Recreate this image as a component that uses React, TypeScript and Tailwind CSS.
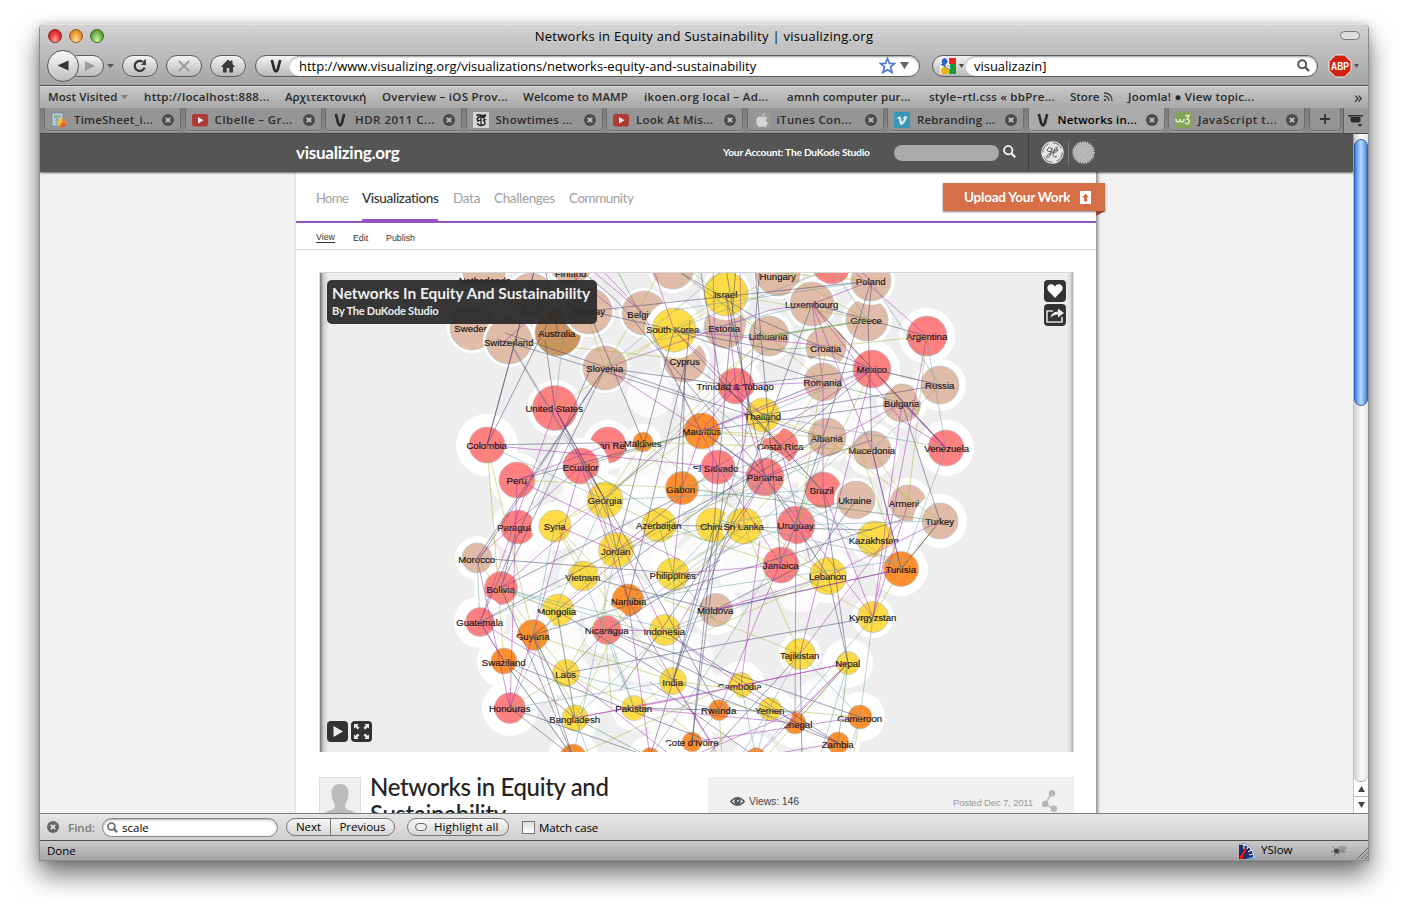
import React from "react";

const LUCIDA = "font-['Open_Sans','Noto_Sans',sans-serif]";
const INSPIRA = "font-['Lato','Open_Sans',sans-serif]";

const T = "#e0bba7";
const Y = "#ffdc46";
const P = "#ff8080";
const O = "#ff8f2e";
const B = "#cd935f";

type Node = [label: string, x: number, y: number, r: number, halo: number, fill: string, lx?: number, ly?: number];

const NODES: Node[] = [
  ["Netherlands", 484, 268, 22, 25, T, 485, 280],
  ["", 531, 295, 22, 25, T],
  ["Finland", 571, 262, 22, 25, T, 571, 273],
  ["", 673, 268, 21, 25, T],
  ["Sweden", 472, 328, 22, 25, T, 472, 328.5],
  ["Australia", 558, 333, 23, 26, B, 557, 333],
  ["Norway", 589, 311, 23, 26, T],
  ["Switzerland", 509, 341, 23, 26, T, 509, 342],
  ["Belgium", 644, 313, 22, 25, T, 645, 314],
  ["Cyprus", 685, 361, 21, 25, T, 685, 361],
  ["Estonia", 725, 327, 21, 25, T, 724.5, 328.5],
  ["Lithuania", 769, 336, 20, 25, T, 768.5, 336.5],
  ["South Korea", 674, 330, 22, 29, Y, 673, 329.5],
  ["Hungary", 778, 274, 22, 25, T, 778, 276],
  ["Croatia", 826, 347, 20, 25, T, 826, 348],
  ["", 832, 264, 20, 26, P],
  ["Greece", 867, 320, 21, 25, T, 866.5, 320],
  ["Luxembourg", 812, 304, 22, 25, T],
  ["Poland", 871, 281, 20, 24, T],
  ["Israel", 726, 294, 22, 26, Y],
  ["Slovenia", 605, 368, 22, 25, T],
  ["Argentina", 927, 336, 20, 28, P],
  ["Romania", 823, 382, 19, 26, T],
  ["Bulgaria", 902, 403, 19, 25, T],
  ["Russia", 940, 385, 19, 26, T],
  ["Mexico", 872, 369, 19, 28, P],
  ["Trinidad & Tobago", 736, 386, 18, 27, P, 735.5, 386.5],
  ["Costa Rica", 780, 446, 18, 28, P, 780.5, 446],
  ["Thailand", 763, 415, 17, 24, Y, 763, 416],
  ["United States", 555, 408, 22.5, 28, P, 554.5, 408.5],
  ["Colombia", 487, 445, 18, 31, P],
  ["Iran Rep", 608, 445, 18, 25, P, 612, 445],
  ["Maldives", 643, 442, 10, 18, O, 643, 443],
  ["Peru", 517, 480, 18, 27, P],
  ["Ecuador", 581, 466, 18, 28, P, 581, 467],
  ["El Salvador", 718, 467, 17, 25, P, 717.5, 468],
  ["Mauritius", 702, 431, 18, 22, O],
  ["Gabon", 682, 488, 16.5, 23, O, 681, 489],
  ["Panama", 765, 477, 19, 28, P],
  ["Albania", 827, 437, 19, 26, T, 827, 438],
  ["Macedonia", 872, 450, 19, 27, T],
  ["Venezuela", 946, 448, 18, 28, P, 947, 448],
  ["Brazil", 823, 490, 18, 25, P, 822, 490],
  ["Armenia", 908, 503, 18, 25, T, 907, 503],
  ["Ukraine", 856, 500, 19, 22, T, 855, 500],
  ["Georgia", 605, 500, 18, 26, Y],
  ["Paraguay", 518, 527, 17, 26, P, 518, 527],
  ["Syria", 555, 526, 16, 24, Y],
  ["Azerbaijan", 659, 525, 17, 26, Y],
  ["China", 713, 525, 17, 24, Y, 713, 526],
  ["Sri Lanka", 744, 526, 18, 22, Y],
  ["Uruguay", 796, 525, 19, 27, P, 796, 525],
  ["Turkey", 940, 521, 18, 27, T],
  ["Kazakhstan", 875, 539, 18, 25, Y, 874, 540],
  ["Jordan", 616, 550, 17.5, 26, Y, 616, 551],
  ["Jamaica", 781, 565, 18, 25, P],
  ["Lebanon", 828, 576, 18.5, 27, Y],
  ["Tunisia", 901, 569, 17.5, 27, O],
  ["Bolivia", 501, 588, 16.5, 27, P, 501, 589],
  ["Morocco", 477, 558, 15, 22, T, 477, 559],
  ["Vietnam", 583, 576, 15, 24, Y, 583, 577],
  ["Philippines", 673, 574, 16, 26, Y, 673, 575],
  ["Namibia", 628, 600, 16, 24, O, 629, 601],
  ["Mongolia", 558, 610, 16, 23, Y, 557, 611],
  ["Guyana", 533, 635, 15.5, 23, O, 533, 636],
  ["Guatemala", 480, 622, 14.5, 26, P],
  ["Nicaragua", 607, 630, 14.5, 24, P],
  ["Indonesia", 665, 630, 15.5, 24, Y, 664.5, 631],
  ["Moldova", 716, 610, 16.5, 25, T, 715.5, 610.5],
  ["Kyrgyzstan", 873, 617, 15.5, 21, Y],
  ["Swaziland", 504, 661, 13, 27, O, 504, 662],
  ["Laos", 566, 673, 13.5, 23, Y, 566, 674],
  ["Tajikistan", 800, 654, 15.5, 21, Y, 800, 655],
  ["Nepal", 848, 663, 11.5, 25, Y],
  ["India", 673, 681, 13.5, 23, Y, 673, 682],
  ["Cambodia", 741, 685, 12.5, 24, Y, 740, 686],
  ["Honduras", 510, 708, 15.5, 28, P],
  ["Bangladesh", 575, 718, 13, 24, Y, 575, 719],
  ["Pakistan", 634, 708, 12.5, 23, Y],
  ["Rwanda", 719, 710, 10.5, 23, O],
  ["Senegal", 795, 723, 11, 25, O, 795, 724],
  ["Yemen", 770, 709, 11.5, 23, Y, 770, 710],
  ["Cameroon", 860, 717, 12, 25, O, 860, 718],
  ["Zambia", 838, 743, 11, 22, O, 838, 744],
  ["Cote d'Ivoire", 692, 742, 10, 22, O, 692, 742],
  ["", 573, 757, 13, 25, O],
  ["", 650, 757, 9.5, 22, O],
  ["", 756, 757, 9.5, 22, O],
];

const BLANK_HALOS = [
  [640, 480], [650, 395], [740, 350], [790, 400], [700, 400], [745, 440], [850, 410], [800, 460], [850, 350],
  [640, 500], [680, 455], [760, 500], [770, 550], [700, 560], [740, 570], [640, 550], [585, 530], [580, 505],
  [840, 530], [900, 530], [600, 600], [650, 610], [690, 600], [800, 590], [530, 560], [530, 600], [560, 640],
  [690, 655], [640, 660], [700, 690], [600, 690], [740, 720], [820, 700], [820, 730], [540, 680], [670, 720],
];

const LINKS: { color: string; d: string }[] = [
  {
    color: "#3c3f6b",
    d: "M487 445L535 268M487 445L643 442M535 268L487 445L559 300M505 333L702 400L830 440M505 341L702 402M558 333L545 268M605 368L480 558M605 368L500 588M589 311L643 442M578 268L616 300L770 480M726 268L750 415L780 446M674 330L822 490M686 361L763 415M726 294L765 477M674 330L616 551M702 431L902 403M589 311L871 281M690 320L675 488M685 361L682 488M872 281L868 320L872 450L901 569M871 281L823 437L795 525M940 385L763 415M946 448L812 304M946 448L872 369M927 336L812 304M872 369L760 320L673 268M902 403L940 521L901 569M765 477L872 440M517 480L702 431M480 622L616 551L823 437M477 558L700 575M477 558L605 368M533 635L740 480L872 369M583 576L715 610L901 569M501 588L673 500M566 673L873 617M480 622L504 661L573 757M510 708L650 757M510 708L573 757M504 661L719 745M501 588L573 757M557 611L673 680L838 743M607 630L860 717M566 673L607 630L720 560M634 708L795 712M664 631L838 743M575 718L533 635M800 654L802 757M800 654L706 757M673 681L714 525L736 268M673 681L745 440L760 268M650 757L673 681L812 304M719 710L605 500L555 408M692 742L725 480M828 576L848 663M823 490L848 663M715 610L812 560L856 500M756 757L650 682M822 490L720 380L700 268M533 635L901 520M480 622L590 370M901 569L940 521M555 408L605 500M555 408L545 340M674 330L872 369M605 368L736 386L872 369M509 341L605 500L628 600M755 268L781 565M686 361L628 600M702 431L765 477L828 576M765 477L620 690M659 525L872 530M714 525L692 742M823 382L674 330L589 311M607 630L770 709L838 743M557 611L575 718M533 635L573 757",
  },
  {
    color: "#a22bb0",
    d: "M589 268L500 345M589 268L643 313L718 467M562 268L616 310M600 268L643 313M740 268L744 526M713 268L715 350L712 500M927 336L850 268M946 448L812 304M812 304L872 450L901 569M812 304L770 310L605 368M871 281L812 304M674 330L836 347M736 386L823 382M736 386L625 480L501 588M605 368L702 431L823 382M517 480L600 520L680 560M487 445L718 467L765 477M555 408L664 631M607 445L517 480M555 408L480 622M581 466L477 558M517 480L510 708M581 466L628 600M517 527L501 588M702 431L872 369L940 385M763 415L674 330M765 477L676 630M902 403L765 477M902 403L873 617M902 403L946 448M823 490L823 382L812 304M796 525L795 723M796 525L719 710M781 565L673 574M872 369L800 654M927 336L873 617M940 521L828 576L715 610M901 569L715 610M908 503L873 617M823 490L873 617M616 551L555 525M659 525L557 611M628 600L673 681L710 740M607 630L664 631L795 723M480 622L566 673L673 757M504 661L480 622M510 708L533 635L581 466M504 661L575 718L673 700L848 663M634 708L795 723M848 663L800 710L690 757M848 663L756 757M860 717L692 742M838 743L756 757M575 718L719 690L848 663M628 600L650 757M673 681L719 757M780 446L810 560L828 576M477 558L510 708M718 467L781 565M653 268L674 330M736 386L702 431L682 488L673 574M765 477L736 386L726 294M812 304L901 420L946 448M702 431L765 477L873 617M616 551L717 467L872 369M857 268L871 281M800 654L901 520M760 540L741 685",
  },
  {
    color: "#6f9fa8",
    d: "M571 268L555 408M509 341L581 466L616 551M726 268L605 368M674 330L832 268M871 281L674 310M871 281L940 385M812 304L660 340M867 320L768 337L674 330M926 336L946 448L901 569M872 369L763 415M823 382L702 431M763 415L946 448M487 445L605 500M555 525L533 635M517 527L501 588M605 500L510 708M616 551L573 757M477 558L480 622M501 588L673 630L828 576M583 576L634 708M674 574L673 681M628 600L901 560M901 560L718 520M940 521L796 525M856 500L702 560L607 630M765 477L828 576M765 477L673 574M828 437L781 565M902 403L715 560M796 525L728 640L650 757M873 617L860 717L848 757M873 617L756 757M800 654L860 717M848 663L820 757M741 685L692 742M741 685L756 757M566 673L719 710M510 708L673 681M575 718L664 631M770 709L756 757M715 610L664 631M504 661L573 757M533 635L575 718L590 757M659 525L823 460M718 467L901 569M705 400L823 490M940 385L872 450M832 268L867 320M718 467L872 539M682 488L828 437M605 500L823 490M702 431L901 569M744 526L628 600M501 588L673 640M616 551L715 525L856 500M607 630L634 708M583 576L480 622M800 654L741 757",
  },
  {
    color: "#abb23a",
    d: "M487 445L504 661M487 445L533 635M509 341L702 361M605 368L674 330L776 276M555 408L726 294M571 268L605 368M605 500L781 320M726 294L871 320M726 268L871 281M776 268L867 320M927 336L826 347M927 336L908 503M822 382L765 477M872 369L796 525M826 347L800 520M702 431L827 437M702 431L555 525M763 415L860 450L901 569M517 480L682 488M823 437L940 521M605 500L555 525L583 576M605 500L659 525M477 558L583 718M501 588L566 673L634 708M555 525L607 600L673 681M555 525L628 600M659 525L781 565L873 617M744 526L664 600M744 526L800 654M714 525L828 576M616 551L557 611M605 500L605 630L612 708M828 576L708 630M873 617L901 569L940 521M800 654L665 600M533 635L673 681L741 690M504 661L575 718M510 708L566 673L607 600M575 718L628 600M634 708L673 681M719 710L722 757M770 709L860 717M848 663L770 752M673 718L720 757M860 717L853 757M573 757L719 690M795 723L719 700M662 268L605 368M871 320L768 337L690 400M902 403L812 304M908 503L872 450M690 270L823 382M643 442L828 576M643 442L872 450M702 431L780 440M765 477L605 560M616 551L718 467L763 415M643 442L605 500M673 574L744 526L823 437",
  },
  {
    color: "#4d8a4d",
    d: "M581 466L702 431M605 500L765 350L826 347M872 369L940 385M823 382L902 403M616 268L702 431M682 488L940 521M575 718L650 757M795 723L848 663M659 525L673 574L715 620M848 663L838 743M768 336L867 320M501 588L557 611M581 466L702 540M674 268L768 337",
  },
];

function Graph() {
  return (
    <svg className="block h-[479px] w-[755px]" viewBox="319 273 755 479">
      {BLANK_HALOS.map(([x, y]) => (
        <circle key={`${x}-${y}`} cx={x} cy={y} r={23} fill="#fff" opacity="0.75" />
      ))}
      {NODES.map(([label, x, y, r, halo, fill, lx, ly], i) => (
        <g key={i}>
          <circle cx={x} cy={y} r={halo} fill="#fff" />
          <circle cx={x} cy={y} r={r} fill={fill} stroke="#b9c2c6" strokeWidth="0.7" />
          <text
            x={(lx ?? x) - 0.3}
            y={(ly ?? y) + 3.5}
            textAnchor="middle"
            fontSize="9.6"
            className="font-['Liberation_Sans',Arial,sans-serif]"
            fill="#111"
            stroke="#111"
            strokeWidth="0.15"
          >
            {label}
          </text>
        </g>
      ))}
      {LINKS.map((l) => (
        <path key={l.color} d={l.d} fill="none" stroke={l.color} strokeWidth="0.9" opacity="0.55" />
      ))}
    </svg>
  );
}

function CloseDot() {
  return (
    <svg className="size-3 shrink-0" viewBox="0 0 12 12">
      <circle cx="6" cy="6" r="6" fill="#4b4b4b" />
      <path d="M3.8 3.8l4.4 4.4M8.2 3.8l-4.4 4.4" stroke="#c4c4c4" strokeWidth="1.8" />
    </svg>
  );
}

function VLogo({ className }: { className: string }) {
  return (
    <svg className={className} viewBox="0 0 16 16">
      <path d="M3.8 2L6.3 11.5Q8 15.5 9.7 11.5L12.2 2" fill="none" stroke="#2b2b2b" strokeWidth="2.7" />
    </svg>
  );
}

function TabIcon({ kind }: { kind: string }) {
  const c = "size-4 shrink-0";
  if (kind === "v") return <VLogo className={c} />;
  if (kind === "youtube")
    return (
      <svg className={c} viewBox="0 0 16 16">
        <rect y="2" width="16" height="12.5" rx="2.5" fill="#b03a38" />
        <path d="M6 5l5.5 3.2L6 11.5z" fill="#eee" />
      </svg>
    );
  if (kind === "sheet")
    return (
      <svg className={c} viewBox="0 0 16 16">
        <path d="M1 1h11v13H1z" fill="#c9d3df" stroke="#7289a5" />
        <path d="M3 3h7v3H3z" fill="#8cb38b" />
        <path d="M3 8h7M3 11h7M6 6v7" stroke="#7b94ad" />
        <circle cx="11" cy="11" r="4.7" fill="#e6bf3c" />
        <path d="M11 11V6.3A4.7 4.7 0 0 1 15.7 11z" fill="#e8823c" />
        <path d="M11 11h4.7A4.7 4.7 0 0 1 8 14.5z" fill="#d04a3a" opacity=".8" />
      </svg>
    );
  if (kind === "times")
    return (
      <svg className={c} viewBox="0 0 16 16">
        <rect width="16" height="16" fill="#d5d5d5" />
        <path d="M3.5 3.800Q5 2 8 3.300t4.500-.8M12.500 2.500Q12.500 5 10 5.200L5 4.800M5.500 5.500Q3 7 5.500 9.300M4 11.500Q8 15.500 12.500 11.500" fill="none" stroke="#222" strokeWidth="1.5" />
        <path d="M8 5v9M10 6.500l2.500 1.200-2 1 2 2.500M4.500 9.500l3-1.500" fill="none" stroke="#222" strokeWidth="1.2" />
      </svg>
    );
  if (kind === "apple")
    return (
      <svg className={c} viewBox="0 0 16 16">
        <rect width="16" height="16" fill="#999" />
        <path d="M10.700 1q.1 2.300-2.500 3.100Q8.200 1.800 10.700 1zM8.200 5c1-.1 1.700-.7 2.900-.6q1.500.1 2.400 1.300c-2.300 1.500-1.800 4.400.5 5.300-.8 2-1.900 4-3.300 4-1 0-1.300-.6-2.500-.6s-1.600.6-2.500.6C3.700 15 1.100 9 3 6.200 4.500 4 6.500 4.500 8.200 5z" fill="#d6d6d6" />
      </svg>
    );
  if (kind === "vimeo")
    return (
      <svg className={c} viewBox="0 0 16 16">
        <rect width="16" height="16" rx="1.5" fill="#3897b5" />
        <path d="M3 6.200C4.500 4.700 6 3.500 6.700 5c.6 1.400.7 4.600 1.500 4.600.7 0 1.900-2.300 1.600-3-.2-.5-.9-.2-1.200 0C9.500 4 13.300 2.600 13 5.500c-.3 2.700-3.800 7.500-5.500 7.500-2.200 0-2-6.300-3.100-6.300l-.8.500z" fill="#dbe9ee" />
      </svg>
    );
  return (
    <svg className={c} viewBox="0 0 16 16">
      <rect width="16" height="16" fill="#84a455" />
      <path d="M1 7q0 3 2 3t2-3q0 3 2 3t2-3M10 3.500h4L12 7q3 .3 2 3.500-1 2-4 .5" fill="none" stroke="#dfe6d3" strokeWidth="1.6" />
    </svg>
  );
}

const TABS = [
  ["sheet", "TimeSheet_i...", "tracking-[0.2px]"],
  ["youtube", "CIbelle – Gr...", "tracking-[0.4px]"],
  ["v", "HDR 2011 C...", "tracking-[0.5px]"],
  ["times", "Showtimes ...", "tracking-[0.3px]"],
  ["youtube", "Look At Mis...", "tracking-[0.25px]"],
  ["apple", "iTunes Con...", "tracking-[0.35px]"],
  ["vimeo", "Rebranding ...", "tracking-[0.1px]"],
  ["v", "Networks in...", "tracking-[0.2px]"],
  ["w3", "JavaScript t...", "tracking-[0.5px]"],
];

const PILL =
  "flex shrink-0 items-center justify-center rounded-full border border-[#5d5d5d] bg-linear-to-b from-[#f4f4f4] to-[#b9b9b9]";

function TitleBar() {
  return (
    <div className="flex h-[22px] items-center border-t border-[#e3e3e3] pl-[8px] pr-[8px]">
      <div className="flex w-[200px] gap-[7px]">
        <i className="size-3.5 rounded-full border border-[#8f2a28] bg-radial-[at_50%_85%] from-[#ffb0a8] via-[#ee3b3b] to-[#a31316]" />
        <i className="size-3.5 rounded-full border border-[#9a5f1c] bg-radial-[at_50%_85%] from-[#ffe9a0] via-[#f0a040] to-[#b25a14]" />
        <i className="size-3.5 rounded-full border border-[#3f6e25] bg-radial-[at_50%_85%] from-[#d5f5b0] via-[#7cbc55] to-[#33691c]" />
      </div>
      <div className="flex-1 pt-0.5 text-center text-[13px] leading-none tracking-[0.27px] text-black">
        Networks in Equity and Sustainability | visualizing.org
      </div>
      <div className="flex w-[200px] justify-end">
        <i className="h-[9px] w-5 rounded-full border-[1.5px] border-[#777] bg-[#dedede]" />
      </div>
    </div>
  );
}

function Toolbar() {
  return (
    <div className="flex h-[39px] items-center pl-[7px]">
      <div className="relative z-10 flex size-8 shrink-0 items-center justify-center rounded-full border border-[#555] bg-linear-to-b from-[#fafafa] to-[#bdbdbd]">
        <svg className="h-[11px] w-3" viewBox="0 0 12 12"><path d="M0 6L12 0.5v11z" fill="#333" /></svg>
      </div>
      <div className={`${PILL} -ml-3 h-[22px] w-[37px] pl-2`}>
        <svg className="h-2.5 w-2.5" viewBox="0 0 10 10"><path d="M10 5L0 0v10z" fill="#999" /></svg>
      </div>
      <svg className="ml-[3px] h-1 w-[7px]" viewBox="0 0 7 4"><path d="M0 0h7L3.5 4z" fill="#555" /></svg>
      <div className={`${PILL} ml-2 h-[22px] w-9`}>
        <svg className="size-4" viewBox="0 0 16 16">
          <path d="M12.5 9.500A5 5 0 1 1 10.500 3.800" fill="none" stroke="#333" strokeWidth="2.2" />
          <path d="M13.8 1v6H8.300q3-1 3-4z" fill="#333" />
        </svg>
      </div>
      <div className={`${PILL} ml-2 h-[22px] w-9`}>
        <svg className="size-3" viewBox="0 0 12 12"><path d="M1 1l10 10M11 1L1 11" stroke="#9a9a9a" strokeWidth="1.8" /></svg>
      </div>
      <div className={`${PILL} ml-2 h-[22px] w-9`}>
        <svg className="size-4" viewBox="0 0 16 16">
          <path d="M8 1.500L0.800 9H3v5.500h3.700V10h2.600v4.500H13V9h2.200L12.500 6V2.500h-2V4z" fill="#3a3a3a" />
        </svg>
      </div>
      <div className="ml-[9px] flex h-[22px] w-[665px] shrink-0 rounded-full border border-[#5d5d5d] bg-linear-to-b from-[#f4f4f4] to-[#b9b9b9]">
        <div className="flex w-[33px] items-center justify-center pl-1.5"><VLogo className="size-4" /></div>
        <div className="flex flex-1 items-center rounded-full bg-white pl-[10px] pr-[10px] text-[13px] leading-none text-black inset-shadow-[0_1px_2px_rgba(0,0,0,.4)]">
          <span className="flex-1 pt-0.5 tracking-[0px]">http://www.visualizing.org/visualizations/networks-equity-and-sustainability</span>
          <svg className="size-[17px]" viewBox="0 0 17 17">
            <path d="M8.5 1.500l2 5h5l-3.900 3.400 1.400 5.600-4.500-2.800L4 15.500l1.400-5.600L1.500 6.500h5z" fill="#fff" stroke="#4878cf" strokeWidth="1.7" />
          </svg>
          <svg className="ml-1 h-[7px] w-[9px]" viewBox="0 0 9 7"><path d="M0 0h9L4.5 7z" fill="#666" /></svg>
        </div>
      </div>
      <div className="ml-[12px] flex h-[22px] w-[386px] shrink-0 rounded-full border border-[#5d5d5d] bg-linear-to-b from-[#f4f4f4] to-[#b9b9b9]">
        <div className="flex w-[32px] items-center pl-[7px]">
          <svg className="size-4" viewBox="0 0 16 16">
            <rect width="16" height="16" fill="#f4f4f4" />
            <path d="M9 0h7v6H9z" fill="#e22" />
            <path d="M10 6h6v10H9z" fill="#1a9a3c" />
            <circle cx="5" cy="3.5" r="3.2" fill="#2b62c9" />
            <circle cx="5" cy="13" r="4" fill="#f2b20e" />
            <path d="M0 6h6l5 4-3 1z" fill="#2b62c9" />
            <path d="M7 1q3 3 0 5t3 4" fill="none" stroke="#fff" strokeWidth="1.5" />
          </svg>
          <svg className="ml-[3px] h-[4px] w-[5px]" viewBox="0 0 5 4"><path d="M0 0h5L2.5 4z" fill="#444" /></svg>
        </div>
        <div className="flex flex-1 items-center rounded-full bg-white pl-[9px] pr-[7px] text-[13px] leading-none text-black inset-shadow-[0_1px_2px_rgba(0,0,0,.4)]">
          <span className="flex-1 pt-0.5 tracking-[-0.02px]">visualizazin]</span>
          <svg className="size-[13px]" viewBox="0 0 13 13">
            <circle cx="5.2" cy="5.2" r="4" fill="none" stroke="#555" strokeWidth="2" />
            <path d="M8 8l4 4" stroke="#555" strokeWidth="2.4" />
          </svg>
        </div>
      </div>
      <svg className="ml-[10px] size-6 shrink-0" viewBox="0 0 24 24">
        <path d="M7.5 1h9L23 7.500v9L16.500 23h-9L1 16.500v-9z" fill="#d3210f" stroke="#eee" />
        <text x="12" y="16" textAnchor="middle" fontSize="10.5" fontWeight="bold" fill="#fff" textLength="18" lengthAdjust="spacingAndGlyphs" className="font-['Liberation_Sans',sans-serif]">ABP</text>
      </svg>
      <svg className="ml-[2px] h-1 w-[5px]" viewBox="0 0 5 4"><path d="M0 0h5L2.5 4z" fill="#555" /></svg>
    </div>
  );
}

function Bookmarks() {
  return (
    <div className="flex h-[22px] items-center overflow-hidden whitespace-nowrap border-t border-[#dcdcdc] bg-linear-to-b from-[#c6c6c6] to-[#a9a9a9] pb-0.5 pl-2 text-[11.5px] font-semibold leading-none text-[#2a2a2a]">
      <span className="flex w-[96px] shrink-0 items-center gap-1">
        <span className="tracking-[0.1px]">Most Visited</span>
        <svg className="h-1 w-[7px]" viewBox="0 0 7 4"><path d="M0 0h7L3.5 4z" fill="#777" /></svg>
      </span>
      <span className="w-[141px] shrink-0 tracking-[0.32px]">http://localhost:888...</span>
      <span className="w-[97px] shrink-0 tracking-[0px]">Αρχιτεκτονική</span>
      <span className="w-[141px] shrink-0 tracking-[0.27px]">Overview – iOS Prov...</span>
      <span className="w-[121px] shrink-0 tracking-[0.02px]">Welcome to MAMP</span>
      <span className="w-[143px] shrink-0 tracking-[0.33px]">ikoen.org local – Ad...</span>
      <span className="w-[142px] shrink-0 tracking-[0.1px]">amnh computer pur...</span>
      <span className="w-[141px] shrink-0 tracking-[0.27px]">style–rtl.css « bbPre...</span>
      <span className="flex w-[58px] shrink-0 items-center gap-1">
        Store
        <svg className="size-[10px]" viewBox="0 0 10 10">
          <path d="M1 1q8 0 8 8M1 4.200q4.800 0 4.800 4.800" fill="none" stroke="#444" strokeWidth="1.3" />
          <circle cx="2" cy="8" r="1.2" fill="#444" />
        </svg>
      </span>
      <span className="w-[226px] shrink-0 tracking-[0.24px]">Joomla! ● View topic...</span>
      <span className="text-[17px] font-normal leading-[18px]">»</span>
    </div>
  );
}

function Tabs() {
  return (
    <div className="flex h-[26px] items-start overflow-hidden border-b border-[#4a4a4a] bg-linear-to-b from-[#7b7b7b] to-[#8a8a8a] pl-[4px]">
      {TABS.map(([icon, label, track], i) => (
        <div
          key={i}
          className={`mr-[3.5px] flex h-[23px] w-[137px] shrink-0 items-center rounded-b-[5px] border border-t-0 pl-[6px] pt-px text-[11.5px] font-semibold leading-none ${
            i === 7 ? "border-[#757575] bg-[#ababab] text-black" : "border-[#6d6d6d] bg-[#959595] text-[#2b2b2b]"
          } shadow-[0_1px_0_#a5a5a5]`}
        >
          <TabIcon kind={icon} />
          <span className={`ml-[7px] w-[88px] shrink-0 whitespace-nowrap ${track}`}>{label}</span>
          <CloseDot />
        </div>
      ))}
      <div className="flex h-[23px] w-8 shrink-0 items-center justify-center rounded-b-[5px] border border-t-0 border-[#6d6d6d] bg-[#959595] shadow-[0_1px_0_#a5a5a5]">
        <svg className="size-2.5" viewBox="0 0 10 10"><path d="M5 0v10M0 5h10" stroke="#333" strokeWidth="1.8" /></svg>
      </div>
      <div className="ml-[2px] flex h-[25px] flex-1 items-center justify-center border-l border-[#5f5f5f] bg-[#9a9a9a]">
        <svg className="h-[13px] w-[15px]" viewBox="0 0 15 13">
          <path d="M0 1h15v1.500H0zM2.500 3h10v4l-1.500 1.500H4L2.500 7zM9.500 10h5l-2.500 3z" fill="#2e2e2e" />
        </svg>
      </div>
    </div>
  );
}

function SiteHeader() {
  return (
    <div className={`relative z-10 flex h-[38px] items-center bg-[#555] pb-px text-white shadow-[0_1px_2px_rgba(0,0,0,.6)] ${INSPIRA}`}>
      <div className="w-[683px] shrink-0 pl-[256px] text-[17px] font-bold leading-none tracking-[-0.25px]">visualizing.org</div>
      <div className="w-[171px] shrink-0 whitespace-nowrap text-[10.2px] font-bold leading-none tracking-[-0.22px]">
        Your Account: The DuKode Studio
      </div>
      <div className="h-4 w-[105px] shrink-0 rounded-full bg-[#aaa]" />
      <svg className="mb-[3px] ml-1 size-[13px] shrink-0" viewBox="0 0 13 13">
        <circle cx="5.2" cy="5.2" r="4.2" fill="none" stroke="#fff" strokeWidth="1.7" />
        <path d="M8.2 8.200l4 4" stroke="#fff" strokeWidth="2.2" />
      </svg>
      <i className="ml-[12px] h-[38px] w-px shrink-0 bg-[#3d3d3d]" />
      <svg className="ml-[12px] size-[23px] shrink-0" viewBox="0 0 23 23">
        <circle cx="11.5" cy="11.5" r="11.2" fill="#e6e6e6" />
        <circle cx="11.5" cy="11.5" r="9.7" fill="none" stroke="#666" strokeWidth="1" strokeDasharray="11 4.2" />
        <path d="M10.5 7.500Q8 5 6.500 8t3.500 2.500q1.500-1 1-3Q10 14 8 16t-2.500 0Q6 13.500 11 11.500t5.500-5q-.5-2-2.500 1t-2 7q1 2.500 4 1M12 11.500q4.500 0 5-2.500-.3-1.500-2 0" fill="none" stroke="#5a5a5a" strokeWidth="1" />
      </svg>
      <i className="ml-1 h-6 w-px shrink-0 bg-[#777]" />
      <svg className="ml-[3px] size-[23px] shrink-0" viewBox="0 0 23 23">
        <circle cx="11.5" cy="11.5" r="10" fill="#bcbcbc" />
        <circle cx="11.5" cy="11.5" r="10.5" fill="none" stroke="#ccc" strokeWidth="1.5" strokeDasharray="1.5 1" />
        <circle cx="11.5" cy="11.5" r="8" fill="none" stroke="#999" strokeWidth="1" strokeDasharray="1 1.2" />
        <circle cx="11.5" cy="11.5" r="5.5" fill="none" stroke="#999" strokeWidth="1" strokeDasharray="1 1.2" />
        <circle cx="11.5" cy="11.5" r="3" fill="none" stroke="#999" strokeWidth="1" strokeDasharray="1 1.2" />
      </svg>
    </div>
  );
}

function MainNav() {
  return (
    <div className={`relative flex h-[51px] shrink-0 border-b-2 border-[#8f55c9] pl-5 text-[13.5px] leading-none text-[#a0a0a0] ${INSPIRA}`}>
      <span className="w-[46px] shrink-0 pt-[20px] text-[13px] tracking-[-0.6px]">Home</span>
      <span className="mr-[15px] w-[76px] shrink-0 whitespace-nowrap border-b-2 border-[#8f55c9] pt-[20px] font-medium tracking-[-0.33px] text-[#333]">Visualizations</span>
      <span className="w-[41px] shrink-0 pt-[20px] tracking-[-0.3px]">Data</span>
      <span className="w-[75px] shrink-0 pt-[20px] tracking-[-0.35px]">Challenges</span>
      <span className="pt-[20px] tracking-[-0.5px]">Community</span>
      <div className="absolute left-[647px] top-[11px] w-[162px]">
        <div className="flex h-7 items-center bg-[#d66e48] pl-[21px] text-[13.5px] font-bold text-white shadow-[0_1px_2px_rgba(0,0,0,.5)]">
          <span className="w-[116px] pt-0.5 tracking-[-0.22px]">Upload Your Work</span>
          <svg className="h-[13px] w-[11px]" viewBox="0 0 11 13">
            <path d="M0 0h11v13H0z" fill="#fff" />
            <path d="M5.5 2.500L9 6.500H7v4H4v-4H2z" fill="#d66e48" />
          </svg>
        </div>
        <svg className="ml-[153px] h-[5px] w-[9px]" viewBox="0 0 9 5"><path d="M0 0h9L0 5z" fill="#8c452c" /></svg>
      </div>
    </div>
  );
}

const OVERLAY_BUTTON = "flex size-[21px] items-center justify-center rounded-[4px] bg-[#333]";

function Viewer() {
  return (
    <div className="relative ml-[23px] mt-[22px] h-[480px] w-[755px] shrink-0 overflow-hidden border-t border-[#d5d5d5] bg-[#eee]">
      <Graph />
      <div className="absolute inset-y-0 left-0 w-2.5 border-l border-[#ddd] bg-linear-to-r from-[#757575] via-[#cfcfcf] via-40% to-transparent" />
      <div className="absolute inset-y-0 right-0 w-2 border-r border-[#ddd] bg-linear-to-l from-[#aaa] via-[#dcdcdc] via-40% to-transparent" />
      <div className={`absolute left-2 top-[7px] h-11 w-[270px] rounded-[5px] bg-[#2b2b2b]/95 pl-[5px] pt-[4px] text-[#eee] ${INSPIRA}`}>
        <div className="whitespace-nowrap text-[15.5px] font-bold leading-[19px] tracking-[-0.05px]">Networks In Equity And Sustainability</div>
        <div className="whitespace-nowrap text-[11px] font-bold leading-[16px] tracking-[-0.2px]">By The DuKode Studio</div>
      </div>
      <div className="absolute right-2 top-[7px] flex flex-col gap-[2px]">
        <div className="flex h-[22px] w-[22px] items-center justify-center rounded-[4px] bg-[#333]">
          <svg className="h-[14px] w-4" viewBox="0 0 16 14"><path d="M8 14L1 6.500Q-1 2 3 .3 6.500-.4 8 2.500 9.500-.4 13 .3 17 2 15 6.500z" fill="#fff" /></svg>
        </div>
        <div className="flex h-[22px] w-[22px] items-center justify-center rounded-[4px] bg-[#333]">
          <svg className="h-[15px] w-[18px]" viewBox="0 0 18 15">
            <path d="M7 3H1v11h15V9" fill="none" stroke="#ddd" strokeWidth="1.6" />
            <path d="M4.5 10Q5 4 12 3.500V.5L18 5l-6 4.500v-3Q7 6.500 4.500 10z" fill="#eee" />
          </svg>
        </div>
      </div>
      <div className="absolute bottom-[10px] left-2 flex gap-[3px]">
        <div className={OVERLAY_BUTTON}>
          <svg className="ml-px h-[11px] w-2.5" viewBox="0 0 10 11"><path d="M0.5 0L10 5.500 .5 11z" fill="#eee" /></svg>
        </div>
        <div className={OVERLAY_BUTTON}>
          <svg className="size-[15px]" viewBox="0 0 15 15">
            <path d="M0 0h4.500L3.300 1.500 5.500 3.700 3.700 5.500 1.500 3.300 0 4.500zM15 0v4.500L13.500 3.300 11.300 5.500 9.500 3.700 11.700 1.500 10.500 0zM0 15v-4.500l1.500 1.200L3.700 9.500l1.800 1.800-2.200 2.200L4.500 15zM15 15h-4.500l1.200-1.500L9.500 11.300l1.800-1.800 2.200 2.200L15 10.500z" fill="#eee" />
          </svg>
        </div>
      </div>
    </div>
  );
}

function Details() {
  return (
    <div className="flex pl-[23px] pt-[25px]">
      <div className="h-[42px] w-[42px] shrink-0 overflow-hidden border border-[#ddd] bg-[#efefef]">
        <svg className="h-10 w-10" viewBox="0 0 40 40">
          <path d="M20 6c7 0 9 5 8.500 11-.5 5-3 8-3.500 11 0 4 5 4 9 6 2 1 3 3 3 6H3c0-3 1-5 3-6 4-2 9-2 9-6-.5-3-3-6-3.500-11C11 11 13 6 20 6z" fill="#bbb" />
        </svg>
      </div>
      <h1 className={`ml-[9px] mt-[-4px] w-[338px] shrink-0 text-[24px] font-medium leading-[27px] tracking-[-0.35px] text-[#222] ${INSPIRA}`}>
        Networks in Equity and
        <br />
        Sustainability
      </h1>
      <div className="flex h-[60px] w-[366px] shrink-0 items-start bg-[#f0f0f0] pl-[22px] font-['Liberation_Sans',Arial,sans-serif] leading-none">
        <svg className="mt-[20px] h-[9px] w-[15px]" viewBox="0 0 15 9">
          <path d="M.8 4.500Q7.500-2.800 14.200 4.500 7.500 11.800.8 4.500z" fill="none" stroke="#555" strokeWidth="1.5" />
          <circle cx="7.5" cy="4.5" r="3.2" fill="#555" />
          <circle cx="8" cy="3.8" r="1" fill="#ddd" />
        </svg>
        <span className="ml-[4px] mt-[19px] w-[204px] text-[10.5px] tracking-[-0.12px] text-[#444]">Views: 146</span>
        <span className="mt-[21px] w-[89px] whitespace-nowrap text-[9.5px] tracking-[-0.16px] text-[#999]">Posted Dec 7, 2011</span>
        <svg className="mt-[13px] h-[22px] w-[15px]" viewBox="0 0 15 22">
          <path d="M10 3L3 14l9 5" fill="none" stroke="#bbb" strokeWidth="1.5" />
          <circle cx="10" cy="3.2" r="3.2" fill="#b5b5b5" />
          <circle cx="3.2" cy="14" r="3.2" fill="#b5b5b5" />
          <circle cx="11.8" cy="18.8" r="3.2" fill="#b5b5b5" />
        </svg>
      </div>
    </div>
  );
}

function Scrollbar() {
  return (
    <div className="flex w-[15px] shrink-0 flex-col border-l border-[#c4c4c4] bg-white">
      <div className="h-[647px] rounded-b-full bg-linear-to-r from-[#cfcfcf] via-[#fbfbfb] to-[#e6e6e6] pt-[5px] shadow-[0_1px_1px_#999]">
        <div className="h-[267px] w-[14px] rounded-full border border-[#2c5fb5] bg-linear-to-r from-[#3f83dc] via-[#b9dcff] to-[#4484dc]" />
      </div>
      <div className="flex h-[16px] items-center justify-center border-b border-[#bbb]">
        <svg className="h-1.5 w-[7px]" viewBox="0 0 7 6"><path d="M3.5 0L7 6H0z" fill="#444" /></svg>
      </div>
      <div className="flex h-[16px] items-center justify-center">
        <svg className="h-1.5 w-[7px]" viewBox="0 0 7 6"><path d="M3.5 6L7 0H0z" fill="#444" /></svg>
      </div>
    </div>
  );
}

const SOFT_BUTTON = "flex h-[18px] items-center rounded-full border border-[#777] bg-linear-to-b from-[#f8f8f8] to-[#d6d6d6] leading-none";

function FindBar() {
  return (
    <div className="flex h-[27px] shrink-0 items-center whitespace-nowrap border-t border-[#7c7c7c] bg-linear-to-b from-[#e6e6e6] to-[#cfcfcf] pl-[7px] text-[11.5px] leading-none text-black">
      <svg className="size-3" viewBox="0 0 12 12">
        <circle cx="6" cy="6" r="6" fill="#666" />
        <path d="M3.8 3.800l4.400 4.400M8.200 3.800l-4.400 4.400" stroke="#e2e2e2" strokeWidth="1.8" />
      </svg>
      <span className="ml-[9px] w-[34px] pt-px font-semibold text-[#7a7a7a]">Find:</span>
      <div className="flex h-[19px] w-[176px] items-center rounded-full border border-[#888] bg-white pl-1 inset-shadow-[0_1px_2px_rgba(0,0,0,.35)]">
        <svg className="mr-1 size-[11px]" viewBox="0 0 13 13">
          <circle cx="5.2" cy="5.2" r="4" fill="none" stroke="#666" strokeWidth="2" />
          <path d="M8 8l4 4" stroke="#666" strokeWidth="2.6" />
        </svg>
        <span className="pt-px">scale</span>
      </div>
      <div className={`${SOFT_BUTTON} ml-2 w-[109px]`}>
        <span className="flex h-full w-[44px] items-center justify-center border-r border-[#777]">Next</span>
        <span className="flex-1 text-center">Previous</span>
      </div>
      <div className={`${SOFT_BUTTON} ml-3 w-[102px] pl-[7px]`}>
        <i className="mr-[7px] h-2 w-3 rounded-full border border-[#666] bg-[#eee]" />
        <span className="tracking-[0.12px]">Highlight all</span>
      </div>
      <i className="ml-[13px] size-[13px] border border-[#777] bg-linear-to-b from-[#ddd] to-white" />
      <span className="ml-1 pt-px tracking-[-0.1px]">Match case</span>
    </div>
  );
}

function StatusBar() {
  return (
    <div className="flex h-[20px] shrink-0 items-center border-t border-[#4e4e4e] bg-linear-to-b from-[#c9c9c9] to-[#a5a5a5] pl-[7px] text-[11.5px] leading-none text-black">
      <span className="w-[1192px]">Done</span>
      <svg className="size-4" viewBox="0 0 16 16">
        <path d="M0 0Q15 0 16 16H0z" fill="#1c2a6b" />
        <path d="M6 16l10-3v3z" fill="#5a9be0" />
        <path d="M0 .8Q14 1 15.200 15M5 2v4M9 4L8 6M12 7l-3 2M14 11l-4 1" fill="none" stroke="#eee" strokeWidth="1.2" />
        <path d="M2.5 14L6.500 6" stroke="#f11" strokeWidth="2" />
        <circle cx="2.5" cy="14" r="2" fill="#f11" />
      </svg>
      <span className="ml-[6px] w-[70px] pb-px tracking-[0px]">YSlow</span>
      <svg className="h-3 w-4" viewBox="0 0 16 12">
        <path d="M0 7l5-1M1 1l4 4M3 11l3-4M8 10L7 7M13 6L8 5" stroke="#777" />
        <ellipse cx="11" cy="3" rx="4.5" ry="2.2" fill="#9a9a9a" />
        <ellipse cx="10" cy="6.5" rx="4.5" ry="1.8" fill="#8a8a8a" />
        <circle cx="5.5" cy="6" r="2.5" fill="#444" />
      </svg>
      <svg className="ml-[10px] mt-[6px] size-[11px]" viewBox="0 0 11 11"><path d="M0 11L11 0M4 11l7-7M8 11l3-3" stroke="#666" /></svg>
    </div>
  );
}

export default function App() {
  return (
    <div className={`h-[900px] w-[1408px] overflow-hidden bg-white pl-[39px] pt-[24px] ${LUCIDA}`}>
      <div className="flex h-[837px] w-[1330px] flex-col overflow-hidden rounded-t-[5px] border-x border-b border-[#8a8a8a] shadow-[0_14px_26px_rgba(0,0,0,.55),0_0_10px_rgba(0,0,0,.18)]">
        <div className="shrink-0 border-b border-[#555] bg-linear-to-b from-[#d3d3d3] to-[#a4a4a4]">
          <TitleBar />
          <Toolbar />
        </div>
        <Bookmarks />
        <Tabs />
        <div className="flex h-[679px] shrink-0 overflow-hidden">
          <div className="w-[1313px] shrink-0 bg-[repeating-linear-gradient(45deg,#f5f5f5_0_1.414px,#efefef_1.414px_2.828px)]">
            <SiteHeader />
            <div className="ml-[256px] flex h-[660px] w-[801px] flex-col border-r border-[#999] bg-white shadow-[1px_0_3px_rgba(0,0,0,.4)]">
              <MainNav />
              <div className="flex h-[27px] shrink-0 items-center border-b border-[#d8d8d8] pl-5 pt-1 font-['Liberation_Sans',Arial,sans-serif] text-[8.8px] leading-none text-[#333]">
                <span className="mr-[18px] border-b border-[#333]">View</span>
                <span className="mr-[18px]">Edit</span>
                <span>Publish</span>
              </div>
              <Viewer />
              <Details />
            </div>
          </div>
          <Scrollbar />
        </div>
        <FindBar />
        <StatusBar />
      </div>
    </div>
  );
}
